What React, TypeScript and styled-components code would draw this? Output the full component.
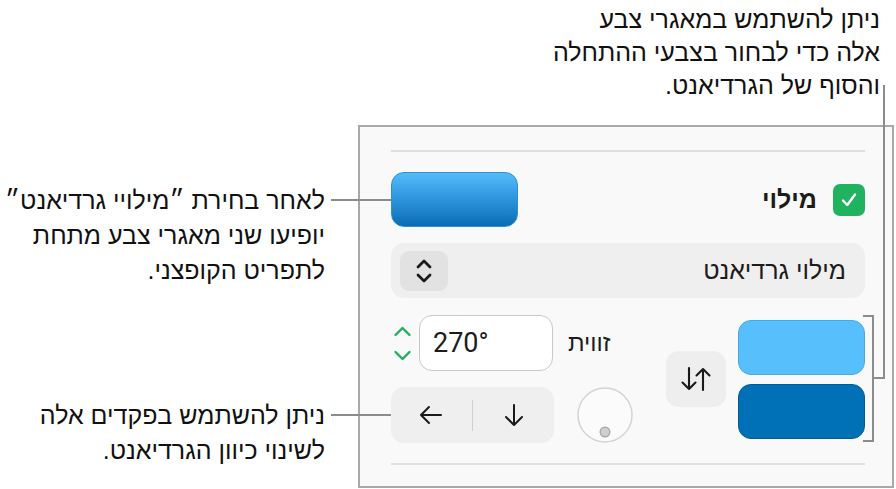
import React from "react";
import styled, { createGlobalStyle } from "styled-components";

const Global = createGlobalStyle`
  html, body { margin: 0; padding: 0; background: #ffffff; }
  body { width: 896px; height: 489px; overflow: hidden; }
`;

const FONT = `"Liberation Sans", Arial, "DejaVu Sans", sans-serif`;

const Page = styled.div`
  position: relative;
  width: 896px;
  height: 489px;
  display: grid;
  grid-template-columns: 358px 538px;
  grid-template-rows: 125px 364px;
  font-family: ${FONT};
  color: #111;
`;

const TopCallout = styled.div`
  grid-column: 2;
  grid-row: 1;
  direction: rtl;
  text-align: right;
  font-size: 25px;
  line-height: 33px;
  padding: 3px 16px 0 0;
`;

const LeftColumn = styled.div`
  grid-column: 1;
  grid-row: 2;
  display: flex;
  flex-direction: column;
  align-items: flex-end;
  padding-right: 33px;
`;

const Callout = styled.div<{ $top: number }>`
  direction: rtl;
  text-align: right;
  font-size: 25px;
  line-height: 35px;
  margin-top: ${(p) => p.$top}px;
`;

const Panel = styled.div`
  grid-column: 2;
  grid-row: 2;
  width: 536px;
  height: 363px;
  box-sizing: border-box;
  border: 2px solid #a9a9a9;
  background: #f9f9f9;
  padding: 23px 27px 0 31px;
  display: flex;
  flex-direction: column;
`;

const Separator = styled.div<{ $mt: number }>`
  height: 2px;
  background: #e0e0e0;
  margin-top: ${(p) => p.$mt}px;
`;

const FillRow = styled.div`
  margin-top: 20px;
  height: 55px;
  display: flex;
  align-items: center;
  justify-content: space-between;
`;

const GradientWell = styled.div`
  width: 127px;
  height: 55px;
  box-sizing: border-box;
  border-radius: 13px;
  border: 1px solid #2f8fd0;
  background: linear-gradient(180deg, #55bcfb 0%, #2d94dc 50%, #0a6db3 100%);
`;

const FillLabelGroup = styled.div`
  display: flex;
  align-items: center;
  gap: 16px;
`;

const BoldLabel = styled.span`
  direction: rtl;
  font-size: 25px;
  font-weight: 700;
  color: #1c1c1c;
`;

const CheckBox = styled.div`
  width: 32px;
  height: 32px;
  border-radius: 7px;
  background: #1fb25f;
  display: flex;
  align-items: center;
  justify-content: center;
`;

const Popup = styled.div`
  margin-top: 16px;
  height: 55px;
  border-radius: 13px;
  background: #efefef;
  display: flex;
  align-items: center;
  justify-content: space-between;
  padding: 0 19px 0 9px;
`;

const StepButton = styled.div`
  width: 48px;
  height: 40px;
  border-radius: 9px;
  background: #e2e2e2;
  display: flex;
  align-items: center;
  justify-content: center;
`;

const PopupText = styled.span`
  direction: rtl;
  font-size: 25px;
  color: #1c1c1c;
`;

const Controls = styled.div`
  margin-top: 17px;
  display: grid;
  grid-template-columns: 163px 112px 60px 1fr;
  grid-template-rows: 56px 56px;
  row-gap: 16px;
`;

const AngleRow = styled.div`
  grid-column: 1;
  grid-row: 1;
  display: flex;
  align-items: center;
  gap: 7px;
  padding-left: 2px;
`;

const ChevronStack = styled.div`
  width: 19px;
  display: flex;
  flex-direction: column;
  align-items: center;
  gap: 13px;
`;

const AngleInput = styled.div`
  width: 134px;
  height: 56px;
  box-sizing: border-box;
  border: 1.5px solid #c8c8c8;
  border-radius: 13px;
  background: #ffffff;
  display: flex;
  align-items: center;
  padding-left: 13px;
  font-family: Roboto, "Liberation Sans", sans-serif;
  font-size: 27px;
  color: #1c1c1c;
`;

const AngleLabel = styled.span`
  grid-column: 2;
  grid-row: 1;
  align-self: center;
  justify-self: start;
  margin-left: 14px;
  direction: rtl;
  font-size: 24px;
  color: #1c1c1c;
`;

const DirectionGroup = styled.div`
  grid-column: 1;
  grid-row: 2;
  height: 56px;
  border-radius: 13px;
  background: #efefef;
  display: flex;
  align-items: center;
`;

const DirButton = styled.div`
  flex: 1;
  height: 100%;
  display: flex;
  align-items: center;
  justify-content: center;
`;

const DirDivider = styled.div`
  width: 1.5px;
  height: 31px;
  background: #cfcfcf;
`;

const DialCell = styled.div`
  grid-column: 2;
  grid-row: 2;
  align-self: center;
  justify-self: start;
  margin-left: 23px;
  width: 56px;
  height: 56px;
`;

const SwapButton = styled.div`
  grid-column: 3;
  grid-row: 1 / span 2;
  align-self: center;
  width: 60px;
  height: 56px;
  border-radius: 13px;
  background: #eeeeee;
  display: flex;
  align-items: center;
  justify-content: center;
`;

const WellStack = styled.div`
  grid-column: 4;
  grid-row: 1 / span 2;
  align-self: center;
  justify-self: end;
  display: flex;
  flex-direction: column;
  gap: 9px;
`;

const ColorWell = styled.div<{ $color: string; $border: string }>`
  width: 127px;
  height: 55px;
  box-sizing: border-box;
  border-radius: 13px;
  background: ${(p) => p.$color};
  border: 1px solid ${(p) => p.$border};
`;

const Overlay = styled.svg`
  position: absolute;
  left: 0;
  top: 0;
  width: 896px;
  height: 489px;
  pointer-events: none;
`;

export default function App() {
  return (
    <>
      <Global />
      <Page>
        <TopCallout>
          ניתן להשתמש במאגרי צבע
          <br />
          אלה כדי לבחור בצבעי ההתחלה
          <br />
          והסוף של הגרדיאנט.
        </TopCallout>

        <LeftColumn>
          <Callout $top={58}>
            לאחר בחירת ״מילויי גרדיאנט״
            <br />
            יופיעו שני מאגרי צבע מתחת
            <br />
            לתפריט הקופצני.
          </Callout>
          <Callout $top={110}>
            ניתן להשתמש בפקדים אלה
            <br />
            לשינוי כיוון הגרדיאנט.
          </Callout>
        </LeftColumn>

        <Panel>
          <Separator $mt={0} />
          <FillRow>
            <GradientWell />
            <FillLabelGroup>
              <BoldLabel>מילוי</BoldLabel>
              <CheckBox>
                <svg width="20" height="20" viewBox="0 0 20 20">
                  <path d="M4 10.5 L8.3 15 L16 4.5" fill="none" stroke="#fff" strokeWidth="2.4" strokeLinecap="round" strokeLinejoin="round" />
                </svg>
              </CheckBox>
            </FillLabelGroup>
          </FillRow>

          <Popup>
            <StepButton>
              <svg width="18" height="26" viewBox="0 0 18 26">
                <path d="M3 9 L9 3 L15 9" fill="none" stroke="#1a1a1a" strokeWidth="2.8" strokeLinecap="round" strokeLinejoin="round" />
                <path d="M3 17 L9 23 L15 17" fill="none" stroke="#1a1a1a" strokeWidth="2.8" strokeLinecap="round" strokeLinejoin="round" />
              </svg>
            </StepButton>
            <PopupText>מילוי גרדיאנט</PopupText>
          </Popup>

          <Controls>
            <AngleRow>
              <ChevronStack>
                <svg width="19" height="11" viewBox="0 0 19 11">
                  <path d="M2.5 9 L9.5 2 L16.5 9" fill="none" stroke="#1db15e" strokeWidth="2.4" strokeLinecap="round" strokeLinejoin="round" />
                </svg>
                <svg width="19" height="11" viewBox="0 0 19 11">
                  <path d="M2.5 2 L9.5 9 L16.5 2" fill="none" stroke="#1db15e" strokeWidth="2.4" strokeLinecap="round" strokeLinejoin="round" />
                </svg>
              </ChevronStack>
              <AngleInput>270°</AngleInput>
            </AngleRow>
            <AngleLabel>זווית</AngleLabel>

            <DirectionGroup>
              <DirButton>
                <svg width="26" height="22" viewBox="0 0 26 22">
                  <path d="M23 11 H3 M11 3 L3 11 L11 19" fill="none" stroke="#1a1a1a" strokeWidth="2" strokeLinecap="round" strokeLinejoin="round" />
                </svg>
              </DirButton>
              <DirDivider />
              <DirButton>
                <svg width="22" height="26" viewBox="0 0 22 26">
                  <path d="M11 3 V23 M3 15 L11 23 L19 15" fill="none" stroke="#1a1a1a" strokeWidth="2" strokeLinecap="round" strokeLinejoin="round" />
                </svg>
              </DirButton>
            </DirectionGroup>

            <DialCell>
              <svg width="56" height="56" viewBox="0 0 56 56">
                <circle cx="28" cy="28" r="27" fill="#fbfbfb" stroke="#d4d4d4" strokeWidth="1.5" />
                <circle cx="28" cy="45" r="4.8" fill="#cfcfcf" stroke="#a9a9a9" strokeWidth="1.4" />
              </svg>
            </DialCell>

            <SwapButton>
              <svg width="32" height="26" viewBox="0 0 32 26">
                <path d="M9 2 V23 M2.5 16.5 L9 23 L15.5 16.5" fill="none" stroke="#1a1a1a" strokeWidth="2.1" strokeLinecap="round" strokeLinejoin="round" />
                <path d="M23 24 V3 M16.5 9.5 L23 3 L29.5 9.5" fill="none" stroke="#1a1a1a" strokeWidth="2.1" strokeLinecap="round" strokeLinejoin="round" />
              </svg>
            </SwapButton>

            <WellStack>
              <ColorWell $color="#57bffc" $border="#46a9e6" />
              <ColorWell $color="#0071b6" $border="#005c98" />
            </WellStack>
          </Controls>

          <Separator $mt={20} />
        </Panel>

        <Overlay viewBox="0 0 896 489">
          <g stroke="#8c8c8c" strokeWidth="2" fill="none">
            <path d="M884 85 V378 H873" />
            <path d="M863 316 H873 V441 H863" />
            <path d="M331 200 H391" />
            <path d="M331 415 H391" />
          </g>
        </Overlay>
      </Page>
    </>
  );
}
